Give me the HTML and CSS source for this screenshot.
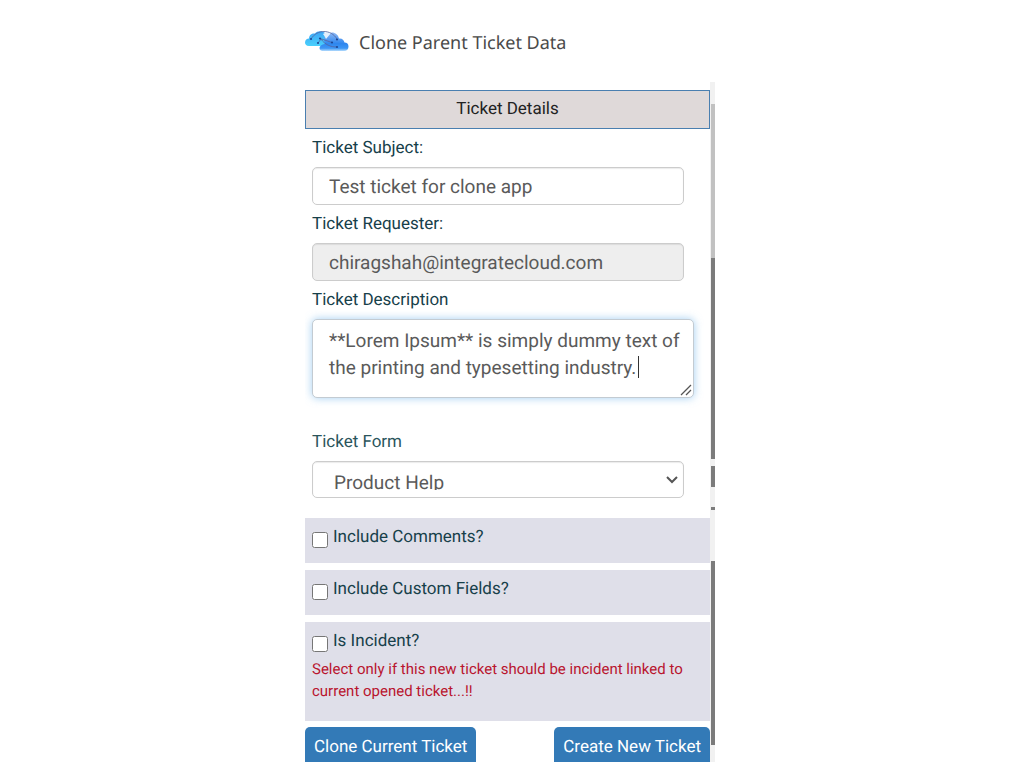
FILE: index.html
```html
<!DOCTYPE html>
<html lang="en">

<head>
    <meta charset="UTF-8">
    <meta name="viewport" content="width=device-width, initial-scale=1.0">
    <title>Clone Parent Ticket Data</title>
    <link rel="stylesheet" href="styles.css">
</head>

<body>
    <div class="app">
        <header class="app-header">
            <svg class="logo" viewBox="0 0 44 22" aria-hidden="true">
                <defs>
                    <linearGradient id="cloud-left" x1="0" y1="0" x2="0" y2="1">
                        <stop offset="0" stop-color="#3fa4f5" />
                        <stop offset="1" stop-color="#48d0fc" />
                    </linearGradient>
                    <linearGradient id="cloud-right" x1="0" y1="0" x2="0" y2="1">
                        <stop offset="0" stop-color="#8db8f5" />
                        <stop offset="0.6" stop-color="#2f86ee" />
                        <stop offset="0.85" stop-color="#3d97f5" />
                        <stop offset="1" stop-color="#b5dcfd" />
                    </linearGradient>
                </defs>
                <path fill="url(#cloud-left)" d="M4 16C1 16 0 14 0 12.500C0 10 2 8.500 4 8.500C4 5 7 3 10 3.500C12 1 17 .5 20 3C23 5 24 8 23 11C22 15 19 16 16 16Z" />
                <path fill="url(#cloud-right)" d="M17 21C14.500 20.500 14 18 15 16.500C16 15 18 14 20 14C18 9 20 5 24 3.500C28 1 33 4 34 8.500C37 8 39 10 39.500 12.500C42 12.500 43.500 14 43.500 16.500C43.500 19 42 21 39 21Z" />
                <path fill="#e4effc" d="M18 4C21 2 24 2 26 3L21 9C20 7 19 5 18 4Z" />
                <path fill="none" stroke="#55649f" stroke-opacity="0.8" stroke-width="1" d="M6 9C12-1 26-1 32 9M15 8.500L27 12.500M13 13L16 9C20 15 26 17 32 17" />
                <g fill="#1d4795">
                    <circle cx="6" cy="9" r="1.100" />
                    <circle cx="15" cy="8.500" r="1.100" />
                    <circle cx="13" cy="13" r="1.100" />
                    <circle cx="27" cy="12.500" r="1.100" />
                    <circle cx="32" cy="9.500" r="1.100" />
                    <circle cx="32" cy="17" r="1.100" />
                </g>
            </svg>
            <h1>Clone Parent Ticket Data</h1>
        </header>

        <div class="viewport">
            <form class="ticket-form">
                <h2>Ticket Details</h2>

                <div class="fields">
                    <label for="subject">Ticket Subject:</label>
                    <input class="control" type="text" id="subject" value="Test ticket for clone app">

                    <label for="requester">Ticket Requester:</label>
                    <input class="control" type="text" id="requester" value="chiragshah@integratecloud.com" readonly>

                    <label for="description">Ticket Description</label>
                    <div class="description-box">
                        <textarea class="control" id="description">**Lorem Ipsum** is simply dummy text of the printing and typesetting industry. </textarea>
                        <span class="caret"></span>
                        <svg class="grip" viewBox="0 0 12 12" aria-hidden="true">
                            <path d="M1 11L11 1M6 11L11 6" />
                        </svg>
                    </div>

                    <label class="form-label" for="form">Ticket Form</label>
                    <div class="select-box">
                        <select class="control" id="form">
                            <option>Product Help</option>
                        </select>
                        <svg class="chevron" viewBox="0 0 12 8" aria-hidden="true">
                            <path d="M1 1L6 6L11 1" />
                        </svg>
                    </div>
                </div>

                <div class="options">
                    <div class="option">
                        <input type="checkbox" id="comments">
                        <label for="comments">Include Comments?</label>
                    </div>
                    <div class="option">
                        <input type="checkbox" id="custom-fields">
                        <label for="custom-fields">Include Custom Fields?</label>
                    </div>
                    <div class="option incident">
                        <input type="checkbox" id="incident">
                        <label for="incident">Is Incident?</label>
                        <p>Select only if this new ticket should be incident linked to current opened ticket...!!</p>
                    </div>
                </div>

                <div class="actions">
                    <button type="button">Clone Current Ticket</button>
                    <button type="button">Create New Ticket</button>
                </div>
            </form>

            <div class="scrollbar" aria-hidden="true">
                <span class="track-top"></span>
                <span class="thumb-light"></span>
                <span class="thumb-long"></span>
                <span class="thumb-short"></span>
                <span class="thumb-line"></span>
                <span class="thumb-end"></span>
            </div>
        </div>
    </div>
</body>

</html>
```
FILE: styles.css
```css
* {
    box-sizing: border-box;
}

body {
    margin: 0;
    background-color: #fff;
    font-family: Roboto, Arial, sans-serif;
    font-size: 17px;
    color: #17404a;
    text-rendering: geometricPrecision;
}

.app {
    display: flex;
    flex-direction: column;
    width: 100%;
    max-width: 410px;
    height: calc(100vh - 6px);
    margin: 0 auto;
    position: relative;
    left: -2px;
}

.app-header {
    display: flex;
    flex: none;
    align-items: center;
    gap: 10px;
    height: 82px;
}

.logo {
    width: 44px;
    height: 22px;
}

h1 {
    margin: 0;
    padding-top: 3px;
    font-family: "Noto Sans", sans-serif;
    font-size: 18px;
    font-weight: 400;
    color: #4a4a4a;
}

.viewport {
    display: flex;
    flex: 1;
    min-height: 0;
    overflow: hidden;
}

.ticket-form {
    flex: 1;
    min-width: 0;
    padding-top: 8px;
}

h2 {
    margin: 0;
    border: 1px solid #4a7fb0;
    background-color: #dfd9d9;
    font-size: 17px;
    font-weight: 400;
    line-height: 37px;
    text-align: center;
    color: #222;
}

.fields {
    padding: 0 16px 20px 7px;
}

.fields label {
    display: block;
    line-height: 38px;
}

.fields .form-label {
    margin-top: 25px;
    color: #2b555c;
}

.control {
    display: block;
    width: 100%;
    height: 38px;
    padding: 0 16px;
    border: 1px solid #ccc;
    border-radius: 5px;
    background-color: #fff;
    box-shadow: inset 0 1px 1px rgba(0, 0, 0, 0.08);
    font-family: inherit;
    font-size: 19px;
    color: #5a5a5a;
    text-rendering: inherit;
}

.fields > .control,
.select-box {
    width: calc(100% - 10px);
}

.control[readonly] {
    background-color: #eee;
}

.description-box,
.select-box {
    position: relative;
}

textarea.control {
    height: 79px;
    padding: 7px 8px 7px 16px;
    border-color: #c3cbd2;
    box-shadow: 0 0 8px rgba(102, 175, 233, 0.6);
    line-height: 27px;
    overflow: hidden;
    resize: none;
    outline: none;
}

.caret {
    position: absolute;
    top: 37px;
    left: 326px;
    width: 1px;
    height: 22px;
    background-color: #333;
}

.grip {
    position: absolute;
    right: 2px;
    bottom: 2px;
    width: 12px;
    height: 12px;
}

.grip path {
    fill: none;
    stroke: #555;
    stroke-width: 1.3;
}

select.control {
    height: 37px;
    padding: 9px 21px 7px;
    appearance: none;
}

.chevron {
    position: absolute;
    top: 15px;
    right: 6px;
    width: 12px;
    height: 8px;
}

.chevron path {
    fill: none;
    stroke: #555;
    stroke-width: 2;
}

.options {
    display: grid;
    gap: 7px;
}

.option {
    display: flex;
    flex-wrap: wrap;
    align-content: flex-start;
    align-items: flex-start;
    gap: 0 5px;
    min-height: 45px;
    padding: 6px 7px;
    background-color: #dfdfe9;
}

.option input {
    width: 16px;
    height: 16px;
    margin: 8px 0 0;
}

.option label {
    line-height: 26px;
}

.incident {
    min-height: 99px;
}

.option p {
    width: 100%;
    margin: 4px 0 0;
    font-size: 15px;
    line-height: 22px;
    color: #b9152f;
}

.actions {
    display: flex;
    justify-content: space-between;
    padding-top: 6px;
}

button {
    height: 40px;
    padding: 0 9px;
    border: none;
    border-radius: 5px;
    background-color: #337ab7;
    font-family: inherit;
    font-size: 17px;
    color: #fff;
    text-rendering: inherit;
    cursor: pointer;
}

.scrollbar {
    display: flex;
    flex: none;
    flex-direction: column;
    width: 5px;
    padding-left: 1px;
    background-color: #f1f1f1;
}

.scrollbar span {
    flex: none;
    background-color: #7b7b7b;
}

.scrollbar .track-top {
    height: 22px;
    background-color: #f1f1f1;
}

.scrollbar .thumb-light {
    height: 154px;
    background-color: #c1c1c1;
}

.thumb-long {
    height: 201px;
    margin-bottom: 7px;
}

.thumb-short {
    height: 21px;
    margin-bottom: 20px;
}

.thumb-line {
    height: 3px;
    margin-bottom: 51px;
}

.thumb-end {
    height: 184px;
}
```
